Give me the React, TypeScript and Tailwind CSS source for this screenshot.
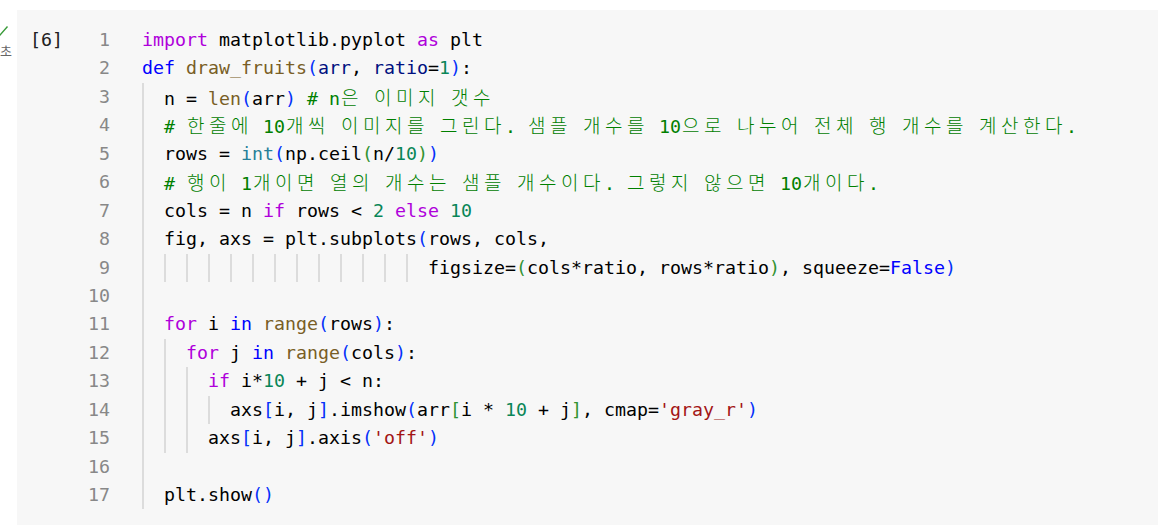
import React from "react";

type Tok = [string, string];

const K = "text-[#af00db]";
const B = "text-[#0000ff]";
const F = "text-[#795e26]";
const T = "text-[#267f99]";
const P = "text-[#001080]";
const N = "text-[#098658]";
const CM = "text-[#008000]";
const S = "text-[#a31515]";
const B1 = "text-[#0431fa]";
const B2 = "text-[#319331]";
const X = "text-black";

type Line = { g: number; toks: Tok[] };

const lines: Line[] = [
  { g: 0, toks: [["import", K], [" matplotlib.pyplot ", X], ["as", K], [" plt", X]] },
  {
    g: 0,
    toks: [
      ["def", B], [" ", X], ["draw_fruits", F], ["(", B1], ["arr", P], [", ", X], ["ratio", P], ["=", X], ["1", N], [")", B1], [":", X],
    ],
  },
  { g: 1, toks: [["n = ", X], ["len", F], ["(", B1], ["arr", X], [")", B1], [" # n은 이미지 갯수", CM]] },
  { g: 1, toks: [["# 한줄에 10개씩 이미지를 그린다. 샘플 개수를 10으로 나누어 전체 행 개수를 계산한다.", CM]] },
  {
    g: 1,
    toks: [["rows = ", X], ["int", T], ["(", B1], ["np.ceil", X], ["(", B2], ["n/", X], ["10", N], [")", B2], [")", B1]],
  },
  { g: 1, toks: [["# 행이 1개이면 열의 개수는 샘플 개수이다. 그렇지 않으면 10개이다.", CM]] },
  { g: 1, toks: [["cols = n ", X], ["if", K], [" rows < ", X], ["2", N], [" ", X], ["else", K], [" ", X], ["10", N]] },
  { g: 1, toks: [["fig, axs = plt.subplots", X], ["(", B1], ["rows, cols,", X]] },
  {
    g: 13,
    toks: [
      ["figsize=", X], ["(", B2], ["cols*ratio, rows*ratio", X], [")", B2], [", squeeze=", X], ["False", B], [")", B1],
    ],
  },
  { g: 1, toks: [] },
  { g: 1, toks: [["for", K], [" i ", X], ["in", B], [" ", X], ["range", F], ["(", B1], ["rows", X], [")", B1], [":", X]] },
  { g: 2, toks: [["for", K], [" j ", X], ["in", B], [" ", X], ["range", F], ["(", B1], ["cols", X], [")", B1], [":", X]] },
  { g: 3, toks: [["if", K], [" i*", X], ["10", N], [" + j < n:", X]] },
  {
    g: 4,
    toks: [
      ["axs", X], ["[", B1], ["i, j", X], ["]", B1], [".imshow", X], ["(", B1], ["arr", X], ["[", B2], ["i * ", X], ["10", N], [" + j", X], ["]", B2], [", cmap=", X], ["'gray_r'", S], [")", B1],
    ],
  },
  { g: 3, toks: [["axs", X], ["[", B1], ["i, j", X], ["]", B1], [".axis", X], ["(", B1], ["'off'", S], [")", B1]] },
  { g: 1, toks: [] },
  { g: 1, toks: [["plt.show", X], ["(", B1], [")", B1]] },
];

const isHangul = (ch: string) => /[\u1100-\u11ff\u3130-\u318f\uac00-\ud7a3]/.test(ch);

function renderText(text: string, cls: string, key: string) {
  const out: React.ReactNode[] = [];
  let buf = "";
  const chars = Array.from(text);
  chars.forEach((ch, i) => {
    if (isHangul(ch)) {
      if (buf) {
        out.push(<span key={"b" + i}>{buf}</span>);
        buf = "";
      }
      out.push(
        <span key={"h" + i} className="inline-block w-[22px] pl-[1px] font-['Noto_Sans_CJK_KR',sans-serif] text-[19px] font-light">
          {ch}
        </span>
      );
    } else {
      buf += ch;
    }
  });
  if (buf) out.push(<span key="end">{buf}</span>);
  return (
    <span key={key} className={cls}>
      {out}
    </span>
  );
}

export default function App() {
  return (
    <div className="w-[1158px] h-[530px] bg-white flex pt-[10px] overflow-hidden">
      <div className="w-[17px] shrink-0 overflow-hidden flex flex-col items-end">
        <svg width="17" height="14" viewBox="0 0 17 14" className="mt-[13px] self-start">
          <path d="M-3 9.5 L0 12 L7.5 3.5" fill="none" stroke="#3a9b3a" strokeWidth="1.4" />
        </svg>
        <div className="w-[17px] flex justify-end pr-[5px] mt-[7px] font-['Noto_Sans_CJK_KR',sans-serif] text-[13px] leading-[14px] text-[#666] whitespace-nowrap">
          <span>초</span>
        </div>
      </div>
      <div className="flex-1 h-[515px] bg-[#f7f7f7] flex pt-4 font-['DejaVu_Sans_Mono',monospace] text-[18.27px] leading-[28.44px]">
        <div className="w-[40px] ml-[13px] shrink-0 text-[#212121] h-[28.44px] whitespace-pre">[6]</div>
        <div className="flex flex-col">
          {lines.map((ln, i) => (
            <div key={i} className="flex h-[28.44px] whitespace-pre">
              <div className="w-[40px] text-right text-[#888] shrink-0">{i + 1}</div>
              <div className="ml-[32px] flex">
                {Array.from({ length: ln.g }).map((_, j) => (
                  <span key={j} className="inline-block w-[22px] h-[28.44px] border-l-2 border-[#dcdcdc] shrink-0" />
                ))}
                <span>{ln.toks.map((t, j) => renderText(t[0], t[1], String(j)))}</span>
              </div>
            </div>
          ))}
        </div>
      </div>
    </div>
  );
}
